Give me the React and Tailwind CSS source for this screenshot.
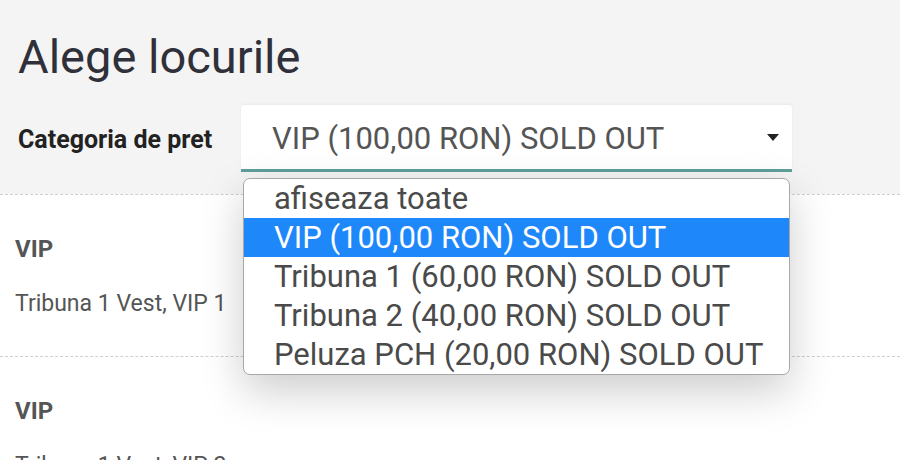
import React from "react";

const options = [
  "afiseaza toate",
  "VIP (100,00 RON) SOLD OUT",
  "Tribuna 1 (60,00 RON) SOLD OUT",
  "Tribuna 2 (40,00 RON) SOLD OUT",
  "Peluza PCH (20,00 RON) SOLD OUT",
];

export default function App() {
  return (
    <div
      className="w-[900px] h-[460px] overflow-hidden bg-white"
      style={{ fontFamily: "Roboto, 'Noto Sans', sans-serif" }}
    >
      <div className="bg-[#f4f4f4] h-[194px] pt-[33px] pl-[18px]">
        <h1 className="text-[47px] leading-none text-[#30303a] font-normal">Alege locurile</h1>
        <div className="flex items-center mt-[25px]">
          <div className="w-[223px] text-[25px] font-bold text-[#222] leading-none pt-[2px]">Categoria de pret</div>
          <div className="relative z-10 w-[551px] h-[67px] bg-white rounded-t-[3px] border-b-[3px] border-[#5e9f9b] shadow-[0_-1px_3px_rgba(0,0,0,0.05)] flex items-center pl-[31px] pr-[10px]">
            <span className="flex-1 text-[31px] leading-none text-[#555] pt-[3px]">VIP (100,00 RON) SOLD OUT</span>
            <svg width="12" height="7" viewBox="0 0 12 7" className="mr-[3px]">
              <path d="M0 0 H12 L6 7 Z" fill="#222" />
            </svg>
            <div className="absolute left-[2px] top-[73px] w-[547px] bg-white border border-[#a8a8a8] rounded-[7px] overflow-hidden shadow-[0_16px_44px_rgba(0,0,0,0.2)]">
              {options.map((o, i) => (
                <div
                  key={o}
                  className={
                    i === 1
                      ? "h-[39px] flex items-center pl-[30px] text-[31px] leading-none bg-[#1e88fa] text-white"
                      : "h-[39px] flex items-center pl-[30px] text-[31px] leading-none text-[#4a4a4a]"
                  }
                >
                  {o}
                </div>
              ))}
            </div>
          </div>
        </div>
      </div>
      <div className="border-t border-dashed border-[#cfcfcf] h-[162px] pt-[42px] pl-[15px]">
        <div className="text-[24px] font-bold leading-none text-[#555]">VIP</div>
        <div className="mt-[31px] text-[23px] leading-none text-[#555]">Tribuna 1 Vest, VIP 1</div>
      </div>
      <div className="border-t border-dashed border-[#cfcfcf] h-[162px] pt-[42px] pl-[15px]">
        <div className="text-[24px] font-bold leading-none text-[#555]">VIP</div>
        <div className="mt-[31px] text-[23px] leading-none text-[#555]">Tribuna 1 Vest, VIP 2</div>
      </div>
    </div>
  );
}
